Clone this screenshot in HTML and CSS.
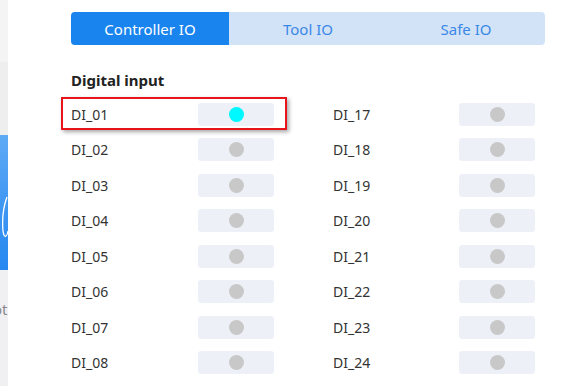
FILE: index.html
```html
<!DOCTYPE html>
<html>
<head>
<meta charset="utf-8">
<link rel="stylesheet" href="styles.css">
</head>
<body>
<div class="app">
  <aside class="side">
    <div class="side-top"></div>
    <div class="side-mid"></div>
    <div class="side-card">
      <svg class="side-stroke" width="8" height="135" viewBox="0 0 8 135"><path d="M7 62 C4 70 2 84 3 96 C4 104 7 102 8 96" fill="none" stroke="#fff" stroke-width="1.3"/></svg>
    </div>
    <div class="side-bottom"><span class="side-text">ot</span></div>
  </aside>
  <main class="main">
    <nav class="tabs">
      <div class="tab active">Controller IO</div>
      <div class="tab">Tool IO</div>
      <div class="tab">Safe IO</div>
    </nav>
    <h2 class="section-title">Digital input</h2>
    <div class="io-grid">
      <div class="io-col">
        <div class="io-row highlighted"><span class="io-label">DI_01</span><span class="io-box"><span class="dot on"></span></span><span class="hl"></span></div>
        <div class="io-row"><span class="io-label">DI_02</span><span class="io-box"><span class="dot"></span></span></div>
        <div class="io-row"><span class="io-label">DI_03</span><span class="io-box"><span class="dot"></span></span></div>
        <div class="io-row"><span class="io-label">DI_04</span><span class="io-box"><span class="dot"></span></span></div>
        <div class="io-row"><span class="io-label">DI_05</span><span class="io-box"><span class="dot"></span></span></div>
        <div class="io-row"><span class="io-label">DI_06</span><span class="io-box"><span class="dot"></span></span></div>
        <div class="io-row"><span class="io-label">DI_07</span><span class="io-box"><span class="dot"></span></span></div>
        <div class="io-row"><span class="io-label">DI_08</span><span class="io-box"><span class="dot"></span></span></div>
      </div>
      <div class="io-col second">
        <div class="io-row"><span class="io-label">DI_17</span><span class="io-box"><span class="dot"></span></span></div>
        <div class="io-row"><span class="io-label">DI_18</span><span class="io-box"><span class="dot"></span></span></div>
        <div class="io-row"><span class="io-label">DI_19</span><span class="io-box"><span class="dot"></span></span></div>
        <div class="io-row"><span class="io-label">DI_20</span><span class="io-box"><span class="dot"></span></span></div>
        <div class="io-row"><span class="io-label">DI_21</span><span class="io-box"><span class="dot"></span></span></div>
        <div class="io-row"><span class="io-label">DI_22</span><span class="io-box"><span class="dot"></span></span></div>
        <div class="io-row"><span class="io-label">DI_23</span><span class="io-box"><span class="dot"></span></span></div>
        <div class="io-row"><span class="io-label">DI_24</span><span class="io-box"><span class="dot"></span></span></div>
      </div>
    </div>
  </main>
</div>
</body>
</html>
```
FILE: styles.css
```css
* { box-sizing: border-box; }
html, body { margin: 0; padding: 0; }
body {
  width: 584px;
  height: 386px;
  overflow: hidden;
  background: #fff;
  font-family: "Noto Sans", "Open Sans", sans-serif;
  color: #333;
}
.app { display: flex; height: 386px; }
.side {
  width: 8px;
  flex: none;
  display: flex;
  flex-direction: column;
}
.side-top { height: 62px; background: #f4f4f5; }
.side-mid { height: 73px; background: #eeeeef; }
.side-card {
  height: 135px;
  background: linear-gradient(180deg, #5eaaf6 0%, #3b94f2 60%, #2788f0 100%);
}
.side-stroke { display: block; }
.side-bottom {
  flex: 1;
  background: #f0f0f2;
  position: relative;
  overflow: hidden;
}
.side-text {
  display: block;
  margin-top: 30px;
  margin-left: -7px;
  font-size: 15px;
  line-height: 18px;
  color: #8a8a8a;
}
.main {
  flex: 1;
  padding: 12px 0 0 63px;
}
.tabs {
  display: flex;
  width: 474px;
  height: 33px;
  background: #d2e3f8;
  border-radius: 4px;
}
.tab {
  flex: 1;
  display: flex;
  align-items: center;
  justify-content: center;
  font-size: 15px;
  color: #3a88e6;
}
.tab.active {
  background: #1a84ee;
  color: #fff;
  border-radius: 4px 0 0 4px;
}
.section-title {
  margin: 25px 0 0 0;
  font-size: 15px;
  font-weight: 700;
  line-height: 20px;
  color: #222;
}
.io-grid {
  display: grid;
  grid-template-columns: 262px 262px;
  margin-top: 13px;
}
.io-col {
  display: flex;
  flex-direction: column;
  gap: 12.43px;
}
.io-row {
  display: flex;
  align-items: center;
  height: 23px;
  position: relative;
}
.io-label {
  width: 127px;
  font-size: 14px;
  color: #333;
}
.io-col.second .io-label { width: 126px; }
.io-box {
  width: 76px;
  height: 23px;
  background: #edf1f7;
  border-radius: 3px;
  display: flex;
  align-items: center;
  justify-content: center;
}
.dot {
  width: 15px;
  height: 15px;
  border-radius: 50%;
  background: #c8c8c8;
}
.dot.on { background: #00f8ff; }
.hl {
  position: absolute;
  left: -10px;
  top: -6px;
  width: 226px;
  height: 33px;
  border: 2px solid #e8141b;
  box-shadow: 2px 2px 4px rgba(0,0,0,0.35);
  pointer-events: none;
}
```
